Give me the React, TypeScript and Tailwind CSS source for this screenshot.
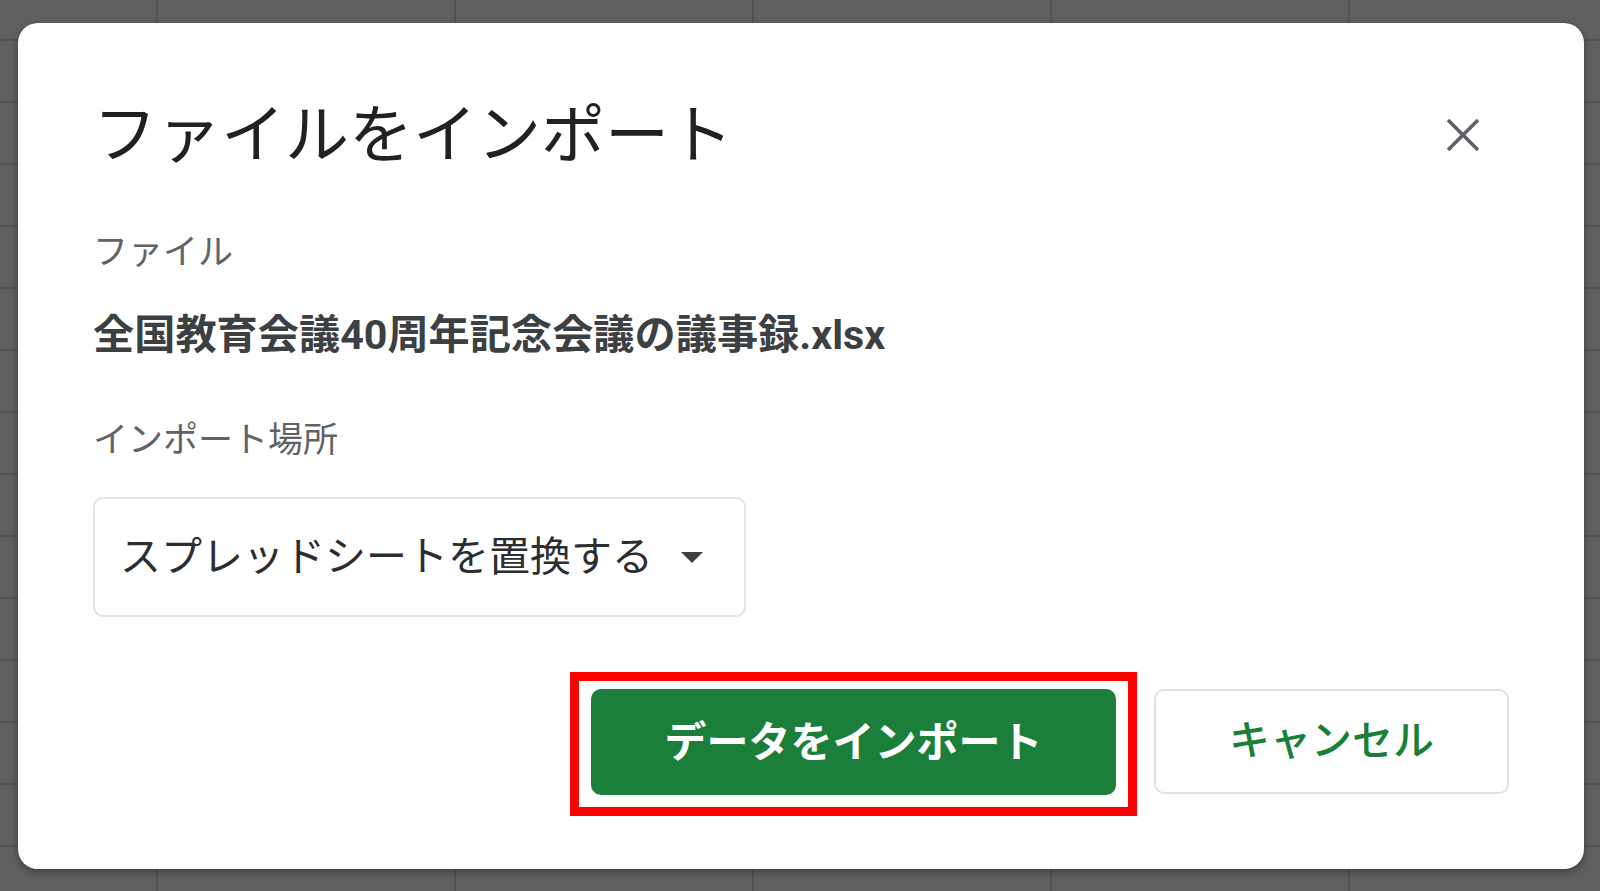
const font = "font-['Roboto','Noto_Sans_CJK_JP',sans-serif]";

function CloseIcon() {
  return (
    <svg width="32" height="32" viewBox="0 0 32 32" fill="none">
      <path d="M1 1L31 31M31 1L1 31" stroke="#5f6368" strokeWidth="3.6" />
    </svg>
  );
}

function CaretDown() {
  return (
    <svg width="22" height="11" viewBox="0 0 22 11">
      <path d="M0 0h22L11 11z" fill="#3c4043" />
    </svg>
  );
}

export default function App() {
  return (
    <div
      className={`h-[891px] w-full overflow-hidden bg-[#5f605f] bg-[linear-gradient(to_right,#525352_2px,transparent_2px),linear-gradient(to_bottom,#525352_2px,transparent_2px)] bg-[length:298px_62px] bg-[position:156px_39px] pl-[18px] pt-[23px] ${font}`}
    >
      <div className="flex h-[846px] w-[1566px] flex-col rounded-[20px] bg-white px-[75px] pt-[66px] shadow-[0_3px_8px_rgba(0,0,0,0.35)]">
        {/* header */}
        <div className="flex h-[92px] items-center justify-between">
          <h1 className="text-[64px] leading-[77px] font-normal text-[#202124]">
            ファイルをインポート
          </h1>
          <button className="flex h-[92px] w-[92px] items-center justify-center">
            <CloseIcon />
          </button>
        </div>

        <div className="mt-[52px] text-[35px] leading-[40px] text-[#5f6368]">ファイル</div>
        <div className="mt-[38px] text-[41.2px] leading-[48px] font-bold text-[#3c4043]">
          全国教育会議40周年記念会議の議事録.xlsx
        </div>

        <div className="mt-[62px] text-[35px] leading-[40px] text-[#5f6368]">インポート場所</div>

        <div className="mt-[36px] flex h-[120px] w-[653px] items-center rounded-[10px] border-2 border-[#e3e4e7] pl-[25px] pr-[41px]">
          <span className="text-[41px] leading-[48px] text-[#2b2d30]">スプレッドシートを置換する</span>
          <span className="ml-[28px] flex">
            <CaretDown />
          </span>
        </div>

        {/* actions */}
        <div className="mt-[55px] flex items-start justify-end">
          <div className="border-[9px] border-[#ff0000] px-[12px] pt-[8px] pb-[12px]">
            <button className="flex h-[106px] w-[525px] items-center justify-center rounded-[10px] bg-[#1b7e3a] text-[42px] font-bold text-white">
              データをインポート
            </button>
          </div>
          <button className="mt-[17px] ml-[17px] flex h-[105px] w-[355px] items-center justify-center rounded-[10px] border-2 border-[#dfe1e4] bg-white text-[41px] font-medium text-[#188038]">
            キャンセル
          </button>
        </div>
      </div>
    </div>
  );
}
